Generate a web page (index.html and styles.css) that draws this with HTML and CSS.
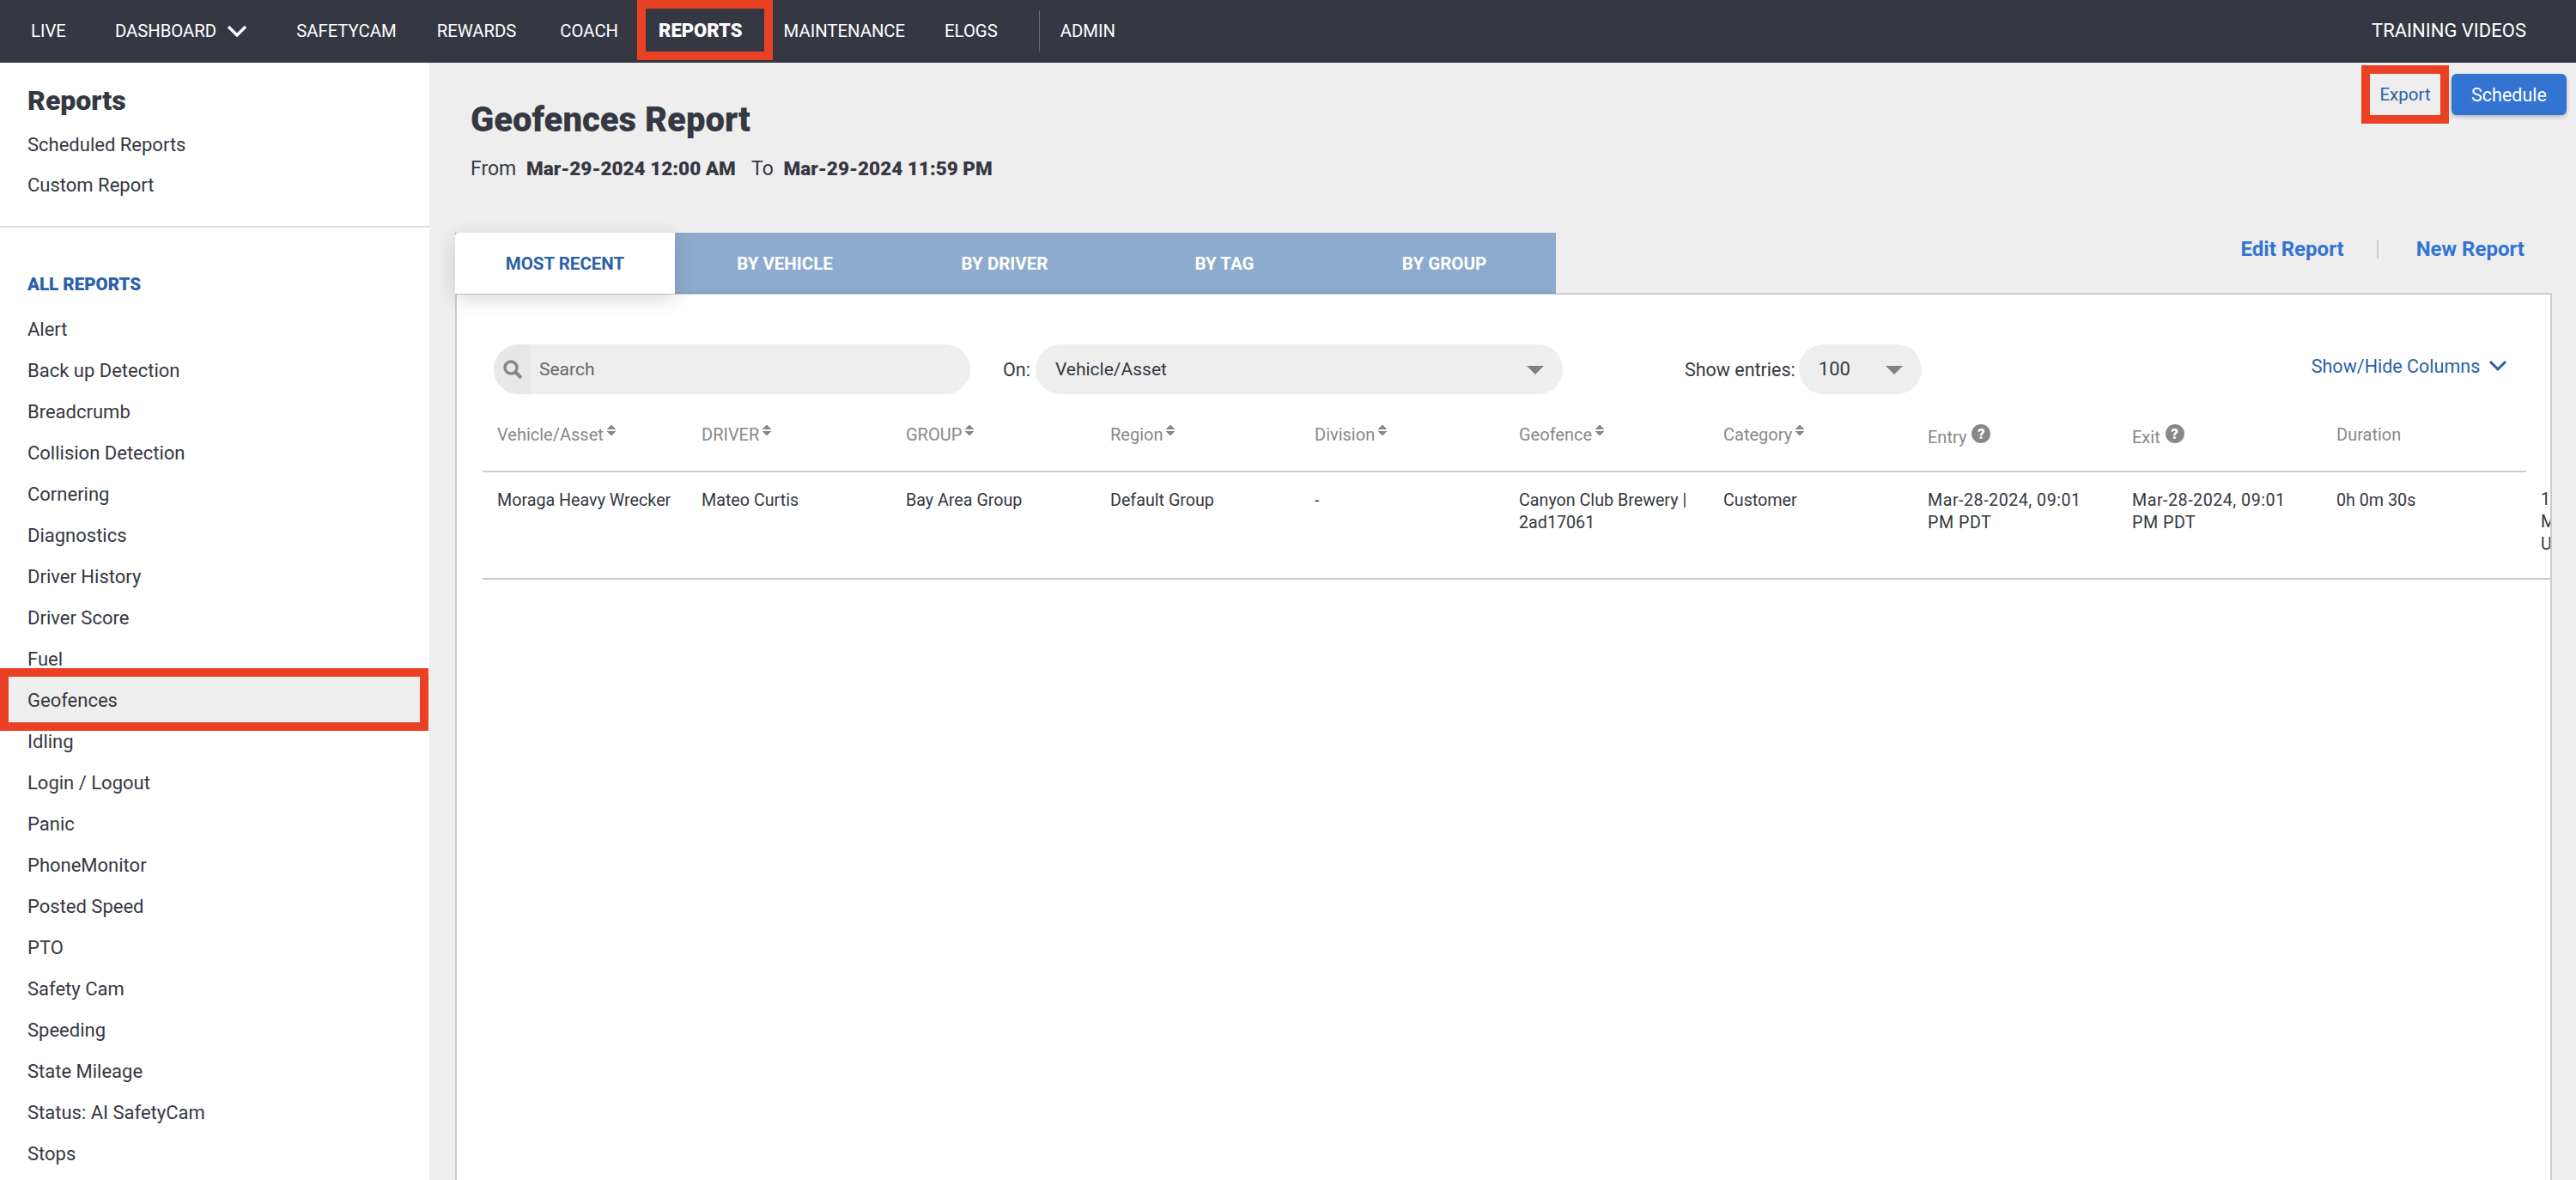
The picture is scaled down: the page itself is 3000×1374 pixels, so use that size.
FILE: index.html

```html
<!DOCTYPE html>
<html lang="en">
<head>
<meta charset="UTF-8">
<title>Geofences Report</title>
<link rel="stylesheet" href="styles.css">
</head>
<body>
<div class="topnav">
<a class="nav-link nav-live">LIVE</a>
<a class="nav-link nav-dash">DASHBOARD
<svg class="nav-chevron" width="24" height="14" viewBox="0 0 24 14"><path d="M2 2l10 10L22 2" fill="none" stroke="#fff" stroke-width="3.4"/></svg>
</a>
<a class="nav-link nav-safety">SAFETYCAM</a>
<a class="nav-link nav-rewards">REWARDS</a>
<a class="nav-link nav-coach">COACH</a>
<a class="nav-link nav-reports">REPORTS<span class="mark mark-reports"></span></a>
<a class="nav-link nav-maint">MAINTENANCE</a>
<a class="nav-link nav-elogs">ELOGS</a>
<span class="nav-sep"></span>
<a class="nav-link nav-admin">ADMIN</a>
<a class="nav-link nav-training">TRAINING VIDEOS</a>
</div>
<div class="page">
<div class="sidebar">
<div class="side-top">
<h2>Reports</h2>
<a class="side-link">Scheduled Reports</a>
<a class="side-link">Custom Report</a>
</div>
<div class="side-list">
<h4>ALL REPORTS</h4>
<a class="side-link">Alert</a>
<a class="side-link">Back up Detection</a>
<a class="side-link">Breadcrumb</a>
<a class="side-link">Collision Detection</a>
<a class="side-link">Cornering</a>
<a class="side-link">Diagnostics</a>
<a class="side-link">Driver History</a>
<a class="side-link">Driver Score</a>
<a class="side-link">Fuel</a>
<a class="side-link side-active">Geofences<span class="mark mark-geofences"></span></a>
<a class="side-link">Idling</a>
<a class="side-link">Login / Logout</a>
<a class="side-link">Panic</a>
<a class="side-link">PhoneMonitor</a>
<a class="side-link">Posted Speed</a>
<a class="side-link">PTO</a>
<a class="side-link">Safety Cam</a>
<a class="side-link">Speeding</a>
<a class="side-link">State Mileage</a>
<a class="side-link">Status: AI SafetyCam</a>
<a class="side-link">Stops</a>
</div>
</div>
<div class="main">
<div class="main-head">
<div class="title-block">
<h1>Geofences Report</h1>
<p class="range">From <b>Mar-29-2024 12:00 AM</b> To <b>Mar-29-2024 11:59 PM</b></p>
</div>
<div class="head-btns">
<button class="btn-export">Export<span class="mark mark-export"></span></button>
<button class="btn-schedule">Schedule</button>
</div>
</div>
<div class="tab-row">
<div class="tabs">
<a class="tab tab-active">MOST RECENT</a>
<a class="tab">BY VEHICLE</a>
<a class="tab">BY DRIVER</a>
<a class="tab">BY TAG</a>
<a class="tab">BY GROUP</a>
</div>
<div class="report-links">
<a>Edit Report</a>
<span class="link-sep"></span>
<a>New Report</a>
</div>
</div>
<div class="panel">
<div class="filters">
<div class="search">
<span class="search-icon">
<svg width="24" height="24" viewBox="0 0 24 24"><circle cx="10" cy="10" r="7" fill="none" stroke="#888" stroke-width="3.4"/><path d="M15 15l7 7" stroke="#888" stroke-width="4"/></svg>
</span>
<span class="search-text">Search</span>
</div>
<label class="on-label">On:</label>
<div class="pill pill-on">Vehicle/Asset<span class="caret"></span></div>
<label class="entries-label">Show entries:</label>
<div class="pill pill-entries">100<span class="caret"></span></div>
<a class="columns-link">Show/Hide Columns
<svg width="22" height="14" viewBox="0 0 22 14"><path d="M2 2l9 9 9-9" fill="none" stroke="#2c60a8" stroke-width="3"/></svg>
</a>
</div>
<table>
<thead>
<tr>
<th>Vehicle/Asset<span class="sort"></span></th>
<th>DRIVER<span class="sort"></span></th>
<th>GROUP<span class="sort"></span></th>
<th>Region<span class="sort"></span></th>
<th>Division<span class="sort"></span></th>
<th>Geofence<span class="sort"></span></th>
<th>Category<span class="sort"></span></th>
<th>Entry<span class="help">?</span></th>
<th>Exit<span class="help">?</span></th>
<th>Duration</th>
<th class="th-last"></th>
</tr>
</thead>
<tbody>
<tr>
<td class="no-wrap">Moraga Heavy Wrecker</td>
<td>Mateo Curtis</td>
<td>Bay Area Group</td>
<td>Default Group</td>
<td>-</td>
<td>Canyon Club Brewery | 2ad17061</td>
<td>Customer</td>
<td class="date">Mar-28-2024, 09:01<br>PM PDT</td>
<td class="date">Mar-28-2024, 09:01<br>PM PDT</td>
<td>0h 0m 30s</td>
<td>1<br>M<br>U</td>
</tr>
</tbody>
</table>
</div>
</div>
</div>
</body>
</html>
```

FILE: styles.css

```css
* {
    box-sizing: border-box;
}
html, body {
    margin: 0;
    height: 1374px;
    overflow: hidden;
}
body {
    font-family: Roboto, 'Liberation Sans', Arial, sans-serif;
    color: #353842;
    background-color: #eeeeee;
}
.topnav {
    display: flex;
    align-items: center;
    height: 73px;
    padding: 0 0 2px 36px;
    background-color: #353842;
}
.nav-link {
    position: relative;
    color: white;
    font-size: 20.3px;
    white-space: nowrap;
}
.nav-dash {
    display: flex;
    align-items: center;
    margin-left: 57px;
}
.nav-chevron {
    margin-left: 12px;
}
.nav-safety { margin-left: 57px; }
.nav-rewards { margin-left: 47px; }
.nav-coach { margin-left: 51px; }
.nav-reports {
    margin-left: 47px;
    font-size: 22px;
    font-weight: 900;
}
.nav-maint { margin-left: 48px; }
.nav-elogs { margin-left: 46px; }
.nav-sep {
    width: 1px;
    height: 48px;
    margin-left: 48px;
    background-color: #666a75;
}
.nav-admin { margin-left: 24px; }
.nav-training {
    margin-left: auto;
    margin-right: 58px;
    font-size: 22px;
}
.mark {
    position: absolute;
    border: 10px solid #ea4125;
    pointer-events: none;
}
.mark-reports {
    left: -25px;
    right: -35px;
    top: -23px;
    height: 70px;
}
.mark-export {
    left: 0;
    right: 0;
    top: 0;
    bottom: 0;
    margin: -10px;
}
.page {
    display: flex;
    height: 1301px;
}
.sidebar {
    flex: none;
    width: 500px;
    background-color: white;
}
.side-top {
    height: 192px;
    padding: 26px 0 0 32px;
    border-bottom: 2px solid #dddddd;
}
.side-top h2 {
    margin: 0 0 10px;
    font-size: 32px;
    font-weight: 900;
    line-height: 36px;
}
.side-top .side-link {
    padding-left: 0;
    height: 47px;
}
.side-list {
    padding-top: 53px;
}
.side-list h4 {
    margin: 0 0 16px 32px;
    font-size: 20.5px;
    font-weight: 900;
    line-height: 26px;
    color: #2c60a8;
}
.side-link {
    position: relative;
    display: block;
    height: 48px;
    padding-left: 32px;
    font-size: 22px;
    line-height: 48px;
}
.side-active {
    z-index: 1;
    background-color: #eeeeee;
    box-shadow: 0 -4px 0 #eeeeee;
}
.mark-geofences {
    left: 0;
    right: 1px;
    top: -14px;
    height: 73px;
}
.main {
    flex: 1;
    min-width: 0;
    padding-right: 28px;
}
.main-head {
    display: flex;
    justify-content: space-between;
    height: 198px;
}
.title-block {
    padding: 44px 0 0 48px;
}
h1 {
    margin: 0;
    font-size: 40px;
    font-weight: 900;
    line-height: 46px;
}
.range {
    margin: 20px 0 0;
    font-size: 23px;
    word-spacing: 6px;
}
.range b {
    margin-right: 7px;
    word-spacing: 0;
    font-size: 22.5px;
    font-weight: 900;
}
.head-btns {
    display: flex;
    gap: 13px;
    margin: 13px -17px 0 0;
    align-items: flex-start;
}
.head-btns button {
    position: relative;
    height: 48px;
    border: none;
    border-radius: 6px;
    font-family: inherit;
}
.btn-export {
    width: 82px;
    font-size: 20.5px;
    color: #2c60a8;
    background-color: #eeeeee;
}
.btn-schedule {
    width: 134px;
    font-size: 21.5px;
    color: white;
    background-color: #3374d3;
    box-shadow: 0 2px 4px rgba(0,0,0,0.25);
}
.tab-row {
    position: relative;
    z-index: 1;
    display: flex;
    justify-content: space-between;
    margin-left: 30px;
}
.tabs {
    display: flex;
    height: 71px;
    width: 1282px;
    background-color: #8dabce;
    border-bottom: 2px solid #7f9fc4;
}
.tab {
    width: 256px;
    color: white;
    font-size: 20.5px;
    font-weight: 700;
    line-height: 72px;
    text-align: center;
}
.tab-active {
    height: 71px;
    color: #2c60a8;
    background-color: white;
    border-radius: 4px 0 0 0;
    box-shadow: 0 6px 22px rgba(0,0,0,0.16);
}
.report-links {
    display: flex;
    align-items: center;
    height: 38px;
    margin: 0 32px 0 0;
    font-size: 24px;
    color: #3374d3;
    font-weight: 700;
}
.link-sep {
    width: 2px;
    height: 22px;
    margin: 0 44px 0 38px;
    background-color: #cccccc;
}
.panel {
    height: 1040px;
    margin: -1px 0 0 30px;
    border: 2px solid #cccccc;
    border-bottom: none;
    background-color: white;
    overflow: hidden;
}
.filters {
    display: flex;
    align-items: center;
    height: 58px;
    margin-top: 58px;
    padding-left: 43px;
    font-size: 21px;
}
.filters label {
    font-size: 21.5px;
}
.search {
    display: flex;
    align-items: center;
    width: 555px;
    height: 58px;
    border-radius: 29px;
    background-color: #eeeeee;
    overflow: hidden;
}
.search-icon {
    display: flex;
    align-items: center;
    width: 43px;
    height: 58px;
    padding-left: 10px;
    background-color: #e8e8e8;
}
.search-text {
    margin-left: 10px;
    color: #666666;
}
.on-label {
    margin-left: 38px;
}
.pill {
    position: relative;
    height: 58px;
    line-height: 58px;
    border-radius: 29px;
    background-color: #eeeeee;
    color: #353842;
}
.pill-on {
    width: 614px;
    margin-left: 6px;
    padding-left: 23px;
}
.pill-entries {
    width: 143px;
    margin-left: 4px;
    padding-left: 23px;
    font-size: 22px;
}
.caret {
    position: absolute;
    right: 22px;
    top: 25px;
    border-left: 10px solid transparent;
    border-right: 10px solid transparent;
    border-top: 10px solid #808080;
}
.entries-label {
    margin-left: 142px;
}
.columns-link {
    display: flex;
    align-items: center;
    gap: 10px;
    margin-left: 454px;
    margin-top: -8px;
    font-size: 21.5px;
    color: #2c60a8;
    white-space: nowrap;
}
table {
    width: 2618px;
    margin: 29px 0 0 30px;
    border-collapse: collapse;
    table-layout: fixed;
    font-size: 20px;
}
th, td {
    width: 238px;
    padding: 0 17px;
    text-align: left;
    vertical-align: top;
}
th {
    height: 61px;
    color: #888888;
    font-weight: 400;
    padding-top: 6px;
    border-bottom: 2px solid #cccccc;
}
.th-last {
    border-bottom: none;
}
td {
    height: 125px;
    padding-top: 20px;
    font-size: 19.7px;
    line-height: 26px;
    color: #353842;
    border-bottom: 2px solid #cccccc;
}
.date {
    letter-spacing: 0.5px;
}
.no-wrap {
    white-space: nowrap;
}
.sort {
    display: inline-block;
    width: 10px;
    height: 14px;
    margin-left: 4px;
    vertical-align: 5px;
    background:
        linear-gradient(to top left, #888 50%, transparent 50%) 0 0 / 5px 6px no-repeat,
        linear-gradient(to top right, #888 50%, transparent 50%) 5px 0 / 5px 6px no-repeat,
        linear-gradient(to bottom left, #888 50%, transparent 50%) 0 8px / 5px 6px no-repeat,
        linear-gradient(to bottom right, #888 50%, transparent 50%) 5px 8px / 5px 6px no-repeat;
}
.help {
    display: inline-block;
    width: 22px;
    height: 22px;
    margin-left: 6px;
    border-radius: 50%;
    background-color: #888888;
    color: white;
    font-size: 17px;
    font-weight: 900;
    line-height: 22px;
    text-align: center;
    vertical-align: 5px;
}
```
